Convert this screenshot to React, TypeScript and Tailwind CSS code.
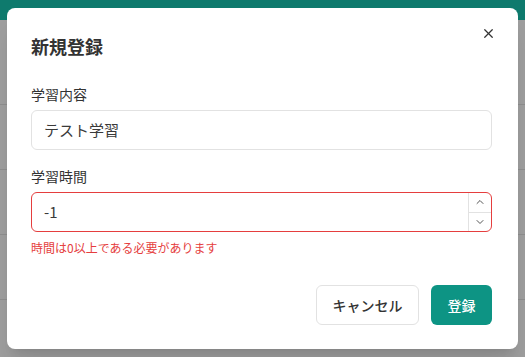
import { X, ChevronUp, ChevronDown } from 'lucide-react';

const font = { fontFamily: '"Noto Sans CJK JP", "Noto Sans", sans-serif' };

function BackgroundRows() {
  return (
    <div className="flex flex-col">
      <div className="h-[20px] bg-[#0e7a6d]" />
      <div className="h-[85px] border-b border-[#8e8e8e]" />
      <div className="h-[65px] border-b border-[#8e8e8e]" />
      <div className="h-[65px] border-b border-[#8e8e8e]" />
      <div className="h-[65px] border-b border-[#8e8e8e]" />
    </div>
  );
}

export default function App() {
  return (
    <div className="relative h-[357px] w-[525px] overflow-hidden bg-[#9e9e9e]" style={font}>
      <BackgroundRows />

      <div className="absolute inset-0 flex items-center justify-center">
        <div className="relative w-[511px] h-[341px] rounded-lg bg-white pl-6 pr-[26px] pt-6 pb-6 shadow-xl flex flex-col">
          <button className="absolute right-[22px] top-[18px] text-[#333]">
            <X size={15} strokeWidth={2} />
          </button>

          <h2 className="text-[18px] leading-[28px] font-bold text-[#333]">新規登録</h2>

          <div className="mt-6 flex flex-col">
            <label className="text-[14px] leading-[20px] text-[#333]">学習内容</label>
            <div className="mt-[6px] h-[40px] rounded-md border border-[#e2e2e2] flex items-center px-3">
              <span className="text-[15px] text-[#3a3a3a]">テスト学習</span>
            </div>
          </div>

          <div className="mt-4 flex flex-col">
            <label className="text-[14px] leading-[20px] text-[#333]">学習時間</label>
            <div className="mt-[6px] h-[40px] rounded-md border border-[#e53e3e] flex items-stretch">
              <div className="flex-1 flex items-center px-3">
                <span className="text-[15px] text-[#3a3a3a]">-1</span>
              </div>
              <div className="w-[23px] border-l border-[#e2e2e2] flex flex-col">
                <div className="flex-1 flex items-center justify-center border-b border-[#e2e2e2] text-[#555]">
                  <ChevronUp size={12} strokeWidth={2} />
                </div>
                <div className="flex-1 flex items-center justify-center text-[#555]">
                  <ChevronDown size={12} strokeWidth={2} />
                </div>
              </div>
            </div>
            <p className="mt-2 text-[12px] leading-[16px] text-[#e53e3e]">時間は0以上である必要があります</p>
          </div>

          <div className="mt-auto flex justify-end gap-3">
            <button className="h-[40px] w-[103px] rounded-md border border-[#e2e2e2] bg-white text-[14px] font-medium text-[#333]">
              キャンセル
            </button>
            <button className="h-[40px] w-[61px] rounded-md bg-[#0d9484] text-[14px] font-medium text-white">
              登録
            </button>
          </div>
        </div>
      </div>
    </div>
  );
}
